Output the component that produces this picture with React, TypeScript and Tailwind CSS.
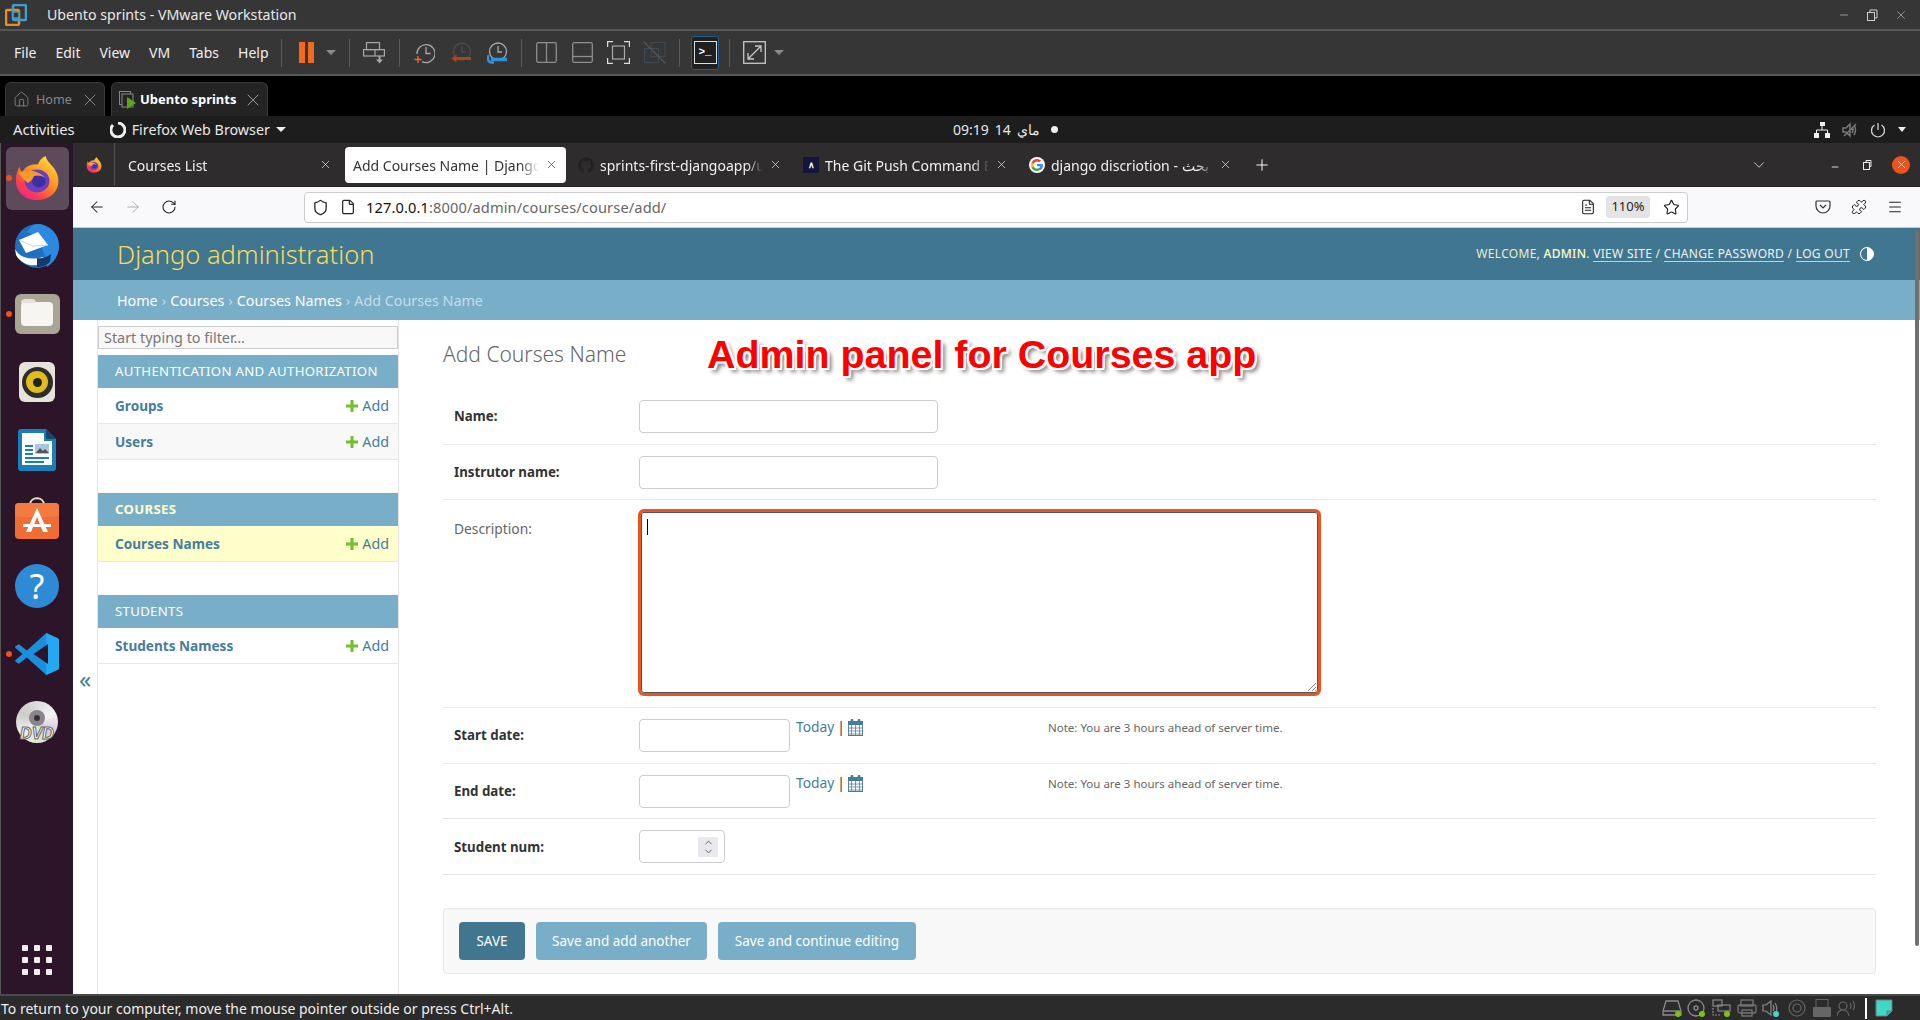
import React from "react";
import { ArrowLeft, ArrowRight, RotateCw, Shield, File, Star, Puzzle, Menu, X, Plus, ChevronDown, Minus, Home, ChevronUp, FileText } from "lucide-react";

const Sep = ({ className = "" }: { className?: string }) => <div className={`w-px h-7 bg-[#5a5a5a] shrink-0 ${className}`} />;
const Tri = ({ className = "" }: { className?: string }) => (
  <div className={`w-0 h-0 border-x-[5px] border-x-transparent border-t-[5px] border-t-[#8a8a8a] shrink-0 ${className}`} />
);

function FirefoxIcon({ size }: { size: number }) {
  return (
    <svg width={size} height={size} viewBox="0 0 48 48">
      <defs>
        <linearGradient id={`ff${size}`} x1="0.8" y1="0.1" x2="0.2" y2="0.95">
          <stop offset="0" stopColor="#ffd53d" />
          <stop offset="0.45" stopColor="#ff8a1f" />
          <stop offset="0.8" stopColor="#ff3d4e" />
          <stop offset="1" stopColor="#f0288c" />
        </linearGradient>
      </defs>
      <path d="M33 1c1 5 5 8 9 13 4 6 5 12 4 17-2 10-11 16-22 16C11 47 2 38 2 26c0-6 2-11 4-14 0 3 1 5 3 6 1-3 3-5 5-6 4-2 8-3 11-2 1-4 4-7 8-9z" fill={`url(#ff${size})`} />
      <ellipse cx="24" cy="27" rx="13" ry="12" fill="#6b3fc4" />
      <circle cx="26" cy="27" r="7" fill="#3f2f9e" />
      <path d="M5 19c4-3 12-4 19-1 5 2 7 4 8 6-4-3-7-3-11-2-2 4-6 9-8 6-3-3-6-6-8-9z" fill="#ff9a27" />
    </svg>
  );
}

function DockIcon({ children, dot, active }: { children: React.ReactNode; dot?: boolean; active?: boolean }) {
  return (
    <div className="relative h-[68px] flex items-center justify-center shrink-0">
      {active && <div className="absolute left-[5px] right-[4px] top-[3px] bottom-[2px] rounded-md bg-[#5d4a5b]" />}
      {dot && <div className="absolute left-[5px] top-[31px] w-[6px] h-[6px] rounded-full bg-[#e95420]" />}
      <div className="relative">{children}</div>
    </div>
  );
}

function Dock() {
  return (
    <div className="w-[73px] shrink-0 flex flex-col bg-[#2c1529] border-l border-[#555] relative">
      <div className="flex flex-col pt-[1px]">
        <DockIcon dot active><FirefoxIcon size={46} /></DockIcon>
        <DockIcon>
          <svg width="48" height="46" viewBox="0 0 48 46">
            <circle cx="24" cy="23" r="22" fill="#1f6fc2" />
            <path d="M24 1c10 0 22 8 22 22 0 10-6 17-12 21-2-10-4-20-10-28-3-4-6-6-10-7 3-4 6-8 10-8z" fill="#2a8ae0" />
            <path d="M6 17l19-8 10 13-22 8z" fill="#fff" />
            <path d="M6 17l14 6 15-1" fill="none" stroke="#c9ccd2" strokeWidth="1" />
            <path d="M2 26c4 8 14 12 28 8l3 5c-10 6-24 4-30-7z" fill="#fff" />
            <path d="M24 35c5 1 10-1 14-4l-1 8c-4 4-9 5-13 5z" fill="#16386e" />
          </svg>
        </DockIcon>
        <DockIcon dot>
          <div className="w-[45px] h-[40px] rounded-md bg-[#a9a595] flex items-center justify-center">
            <div className="relative w-[32px] h-[24px] rounded-sm bg-[#f6f5f2]">
              <div className="absolute -top-[3px] left-0 w-[15px] h-[4px] rounded-t-sm bg-[#e4e1da]" />
            </div>
          </div>
        </DockIcon>
        <DockIcon>
          <div className="w-[36px] h-[40px] rounded-md bg-[#e6e3da] flex items-center justify-center">
            <div className="w-[31px] h-[31px] rounded-full bg-[#2d2d2d] flex items-center justify-center">
              <div className="w-[22px] h-[22px] rounded-full bg-[#e2bb1c] flex items-center justify-center">
                <div className="w-[9px] h-[9px] rounded-full bg-[#222]" />
              </div>
            </div>
          </div>
        </DockIcon>
        <DockIcon>
          <svg width="38" height="42" viewBox="0 0 38 42">
            <path d="M3 0h25l10 10v29a3 3 0 0 1-3 3H3a3 3 0 0 1-3-3V3a3 3 0 0 1 3-3z" fill="#1a7fb8" />
            <path d="M28 0l10 10h-10z" fill="#15486e" />
            <path d="M4 4h22v8h8v24H4z" fill="#fff" />
            <rect x="7" y="16" width="8" height="2" fill="#1a7fb8" />
            <rect x="7" y="20" width="8" height="2" fill="#1a7fb8" />
            <rect x="7" y="24" width="8" height="2" fill="#1a7fb8" />
            <rect x="7" y="28" width="24" height="2" fill="#1a7fb8" />
            <rect x="7" y="32" width="19" height="2" fill="#1a7fb8" />
            <rect x="17" y="15" width="14" height="10" fill="#a9c8dc" />
            <path d="M18 24l4-5 3 3 2-2 4 4z" fill="#555" />
          </svg>
        </DockIcon>
        <DockIcon>
          <svg width="44" height="42" viewBox="0 0 44 42">
            <path d="M15 8c0-9 14-9 14 0" fill="none" stroke="#e9dcc9" strokeWidth="2" />
            <rect x="0" y="6" width="44" height="36" rx="4" fill="#ef6c33" />
            <rect x="0" y="6" width="44" height="14" rx="4" fill="#f47b3f" />
            <path d="M22 11L11 35h5l6-15 6 15h5z" fill="#fff" />
            <rect x="8" y="27" width="28" height="3" fill="#fff" />
          </svg>
        </DockIcon>
        <DockIcon>
          <div className="w-[44px] h-[44px] rounded-full bg-[#2f8ad6] flex items-center justify-center text-white text-[34px] leading-none">?</div>
        </DockIcon>
        <DockIcon dot>
          <svg width="44" height="44" viewBox="0 0 100 100">
            <path d="M71 98l26-12a5 5 0 0 0 3-5V19a5 5 0 0 0-3-5L71 2 27 42 9 28l-7 4a3 3 0 0 0 0 5l15 13L2 63a3 3 0 0 0 0 5l7 4 18-14z" fill="#1a8fdc" />
            <path d="M71 98l26-12a5 5 0 0 0 3-5V19a5 5 0 0 0-3-5L71 2z" fill="#25a8f2" />
            <path d="M75 27L42 50l33 23z" fill="#2c1529" />
          </svg>
        </DockIcon>
        <DockIcon>
          <div className="relative w-[42px] h-[42px]">
            <div className="absolute inset-0 rounded-full bg-[conic-gradient(#ddd,#f4f4f4,#d8c8e0,#dfe9cf,#eee,#ccc,#ddd)] flex items-center justify-center">
              <div className="w-[16px] h-[16px] rounded-full bg-[#8b858b] flex items-center justify-center -mt-2">
                <div className="w-[6px] h-[6px] rounded-full bg-[#333]" />
              </div>
            </div>
            <div className="absolute -left-[1px] -right-[1px] bottom-[1px] text-center text-[16px] leading-none italic font-extrabold text-white font-['Liberation_Sans',sans-serif] [-webkit-text-stroke:1px_#666]">DVD</div>
          </div>
        </DockIcon>
      </div>
      <div className="mt-auto mb-[19px] self-center grid grid-cols-3 gap-x-[6px] gap-y-[6px] pr-px">
        {Array.from({ length: 9 }).map((_, i) => (
          <div key={i} className="w-[6px] h-[6px] rounded-[1px] bg-[#eeeeee]" />
        ))}
      </div>
    </div>
  );
}

function BrowserTab({ icon, title, active, w }: { icon?: React.ReactNode; title: string; active?: boolean; w: string }) {
  return (
    <div className={`relative flex items-center h-[36px] rounded-[4px] shrink-0 ${w} ${active ? "bg-white text-[#333]" : "text-[#f0f0f0]"} gap-[6px]`}>
      {icon}
      <div className="flex-1 min-w-0 overflow-hidden whitespace-nowrap text-[14px] pt-[2px] [mask-image:linear-gradient(to_right,black_90%,transparent)]">{title}</div>
      <X size={13} strokeWidth={1.4} className={active ? "text-[#444] shrink-0" : "text-[#ddd] shrink-0"} />
    </div>
  );
}

function Row({ label, bold = true, children, h, lpt = "pt-[7px]" }: { label: string; bold?: boolean; children: React.ReactNode; h: string; lpt?: string }) {
  return (
    <div className={`flex border-b border-[#e6e6e6] pl-[11px] pt-[11px] ${h}`}>
      <div className={`w-[185px] shrink-0 ${lpt} ${bold ? "text-[13.3px] font-bold text-[#333]" : "text-[13.8px] text-[#666]"}`}>{label}</div>
      {children}
    </div>
  );
}

const Field = ({ w, h = "h-[33px]" }: { w: string; h?: string }) => (
  <input className={`${w} ${h} rounded-[4px] border border-[#ccc] bg-white shrink-0`} />
);

function ModelRow({ name, bg = "bg-white", h = "h-[36px]" }: { name: string; bg?: string; h?: string }) {
  return (
    <div className={`flex items-center justify-between border-b border-[#e6e6e6] pl-[17px] pr-[9px] ${bg} ${h}`}>
      <span className="text-[13.6px] font-bold text-[#447e9b] pt-[2px]">{name}</span>
      <span className="flex items-center gap-[4px] text-[14.3px] text-[#447e9b]">
        <svg width="12" height="12" viewBox="0 0 12 12"><path d="M4.500 0h3v4.500H12v3H7.500V12h-3V7.500H0v-3h4.500z" fill="#70bf2b" /></svg>
        Add
      </span>
    </div>
  );
}

const Section = ({ title, active }: { title: string; active?: boolean }) => (
  <div className={`h-[33px] bg-[#79aec8] flex items-center pl-[17px] pt-[1px] text-[13.2px] tracking-[0.32px] ${active ? "text-[#ffffcc] font-bold" : "text-white"}`}>{title}</div>
);

const Calendar = () => (
  <svg width="15" height="17" viewBox="0 0 17 17" preserveAspectRatio="none" className="ml-[1px]">
    <rect x="0.500" y="2.500" width="16" height="14" fill="#fff" stroke="#447e9b" />
    <rect x="0" y="2" width="17" height="4" fill="#447e9b" />
    <rect x="3" y="0" width="3" height="5" rx="1" fill="#447e9b" />
    <rect x="11" y="0" width="3" height="5" rx="1" fill="#447e9b" />
    <path d="M0 9h17M0 12h17M0 15h17M4 6v11M8.500 6v11M13 6v11" stroke="#447e9b" strokeWidth="0.800" />
  </svg>
);

const DateExtra = () => (
  <>
    <div className="flex items-center h-[17px] ml-[6px] w-[252px] shrink-0 text-[13.8px] text-[#447e9b]">
      Today <span className="text-[#333] ml-[3px] mr-[2px]">|</span>
      <Calendar />
    </div>
    <div className="text-[11.5px] text-[#666]">Note: You are 3 hours ahead of server time.</div>
  </>
);

function StatusIcons() {
  return (
    <div className="flex items-center gap-[5px] pr-[27px]">
      <svg width="20" height="18" viewBox="0 0 20 18" fill="none" stroke="#8a8a8a" strokeWidth="1.300"><path d="M4 2h12l3 10v4H1v-4zM1 12h18" /><circle cx="16" cy="15" r="3" fill="#7cc412" stroke="none" /></svg>
      <svg width="20" height="18" viewBox="0 0 20 18" fill="none" stroke="#8a8a8a" strokeWidth="1.300"><circle cx="9" cy="9" r="8" /><circle cx="9" cy="9" r="2" /><circle cx="15" cy="15" r="3" fill="#7cc412" stroke="none" /></svg>
      <svg width="20" height="18" viewBox="0 0 20 18" fill="none" stroke="#8a8a8a" strokeWidth="1.200"><rect x="1" y="1" width="9" height="6" /><rect x="6" y="6" width="12" height="6" /><path d="M1 9v7h8" strokeDasharray="2 1" /><circle cx="15" cy="15" r="3" fill="#7cc412" stroke="none" /></svg>
      <svg width="20" height="18" viewBox="0 0 20 18" fill="none" stroke="#777" strokeWidth="1.300"><rect x="4" y="1" width="12" height="6" /><rect x="1" y="6" width="18" height="8" rx="2" /><rect x="5" y="11" width="10" height="6" /></svg>
      <svg width="20" height="18" viewBox="0 0 20 18" fill="none" stroke="#8a8a8a" strokeWidth="1.200"><path d="M1 6h3l5-4v14l-5-4H1zM11 6q2 3 0 6M13 4q3 5 1 9" /><circle cx="14" cy="15" r="3" fill="#3fd8c8" stroke="none" /></svg>
      <svg width="20" height="18" viewBox="0 0 20 18" fill="none" stroke="#666" strokeWidth="1.200"><circle cx="10" cy="9" r="8" /><circle cx="10" cy="9" r="4" /></svg>
      <svg width="20" height="18" viewBox="0 0 20 18"><rect x="4" y="0.500" width="12" height="8" fill="none" stroke="#666" /><rect x="1" y="8" width="18" height="10" rx="1" fill="#666" /></svg>
      <svg width="20" height="18" viewBox="0 0 20 18" fill="none" stroke="#666" strokeWidth="1.200"><circle cx="6" cy="7" r="4" /><path d="M0 17q1-6 6-6t6 6M13 4q2 3 0 6M16 2q3 5 0 9" /></svg>
      <div className="w-[2px] h-[21px] bg-white ml-[3px]" />
      <svg width="18" height="18" viewBox="0 0 18 18" className="ml-[3px]"><path d="M1 1h16v11l-5 5H1z" fill="#3fd8c8" stroke="#777" /><path d="M12 17v-5h5" fill="#2bb" stroke="#777" /></svg>
    </div>
  );
}

function VmToolbar() {
  return (
    <div className="h-[47px] shrink-0 bg-[#363636] border-y-2 border-[#565656] flex items-center text-[14px] text-[#efefef] pl-[14px]">
      <div className="flex items-center w-[267px] gap-[19px]">
        <span>File</span><span>Edit</span><span>View</span><span>VM</span><span>Tabs</span><span>Help</span>
      </div>
      <Sep />
      <div className="w-[6px] h-[21px] bg-[#f26a1b] ml-[17px]" />
      <div className="w-[6px] h-[21px] bg-[#f26a1b] ml-[3px]" />
      <Tri className="ml-[12px]" />
      <Sep className="ml-[13px]" />
      <svg width="22" height="22" viewBox="0 0 22 22" fill="none" stroke="#a8a8a8" strokeWidth="1.200" className="ml-[13px]">
        <rect x="3.500" y="0.600" width="13" height="7" /><rect x="0.600" y="7.600" width="20.800" height="6.400" /><path d="M12 7.600V14" />
        <path d="M16.500 14v4" strokeWidth="2" /><path d="M13 17.500h7l-3.500 4z" fill="#a8a8a8" stroke="none" />
      </svg>
      <Sep className="ml-[14px]" />
      <svg width="21" height="22" viewBox="0 0 21 22" fill="none" stroke="#a8a8a8" strokeWidth="1.300" className="ml-[14px]">
        <path d="M3 12a9 9 0 1 1 5 7.700" /><path d="M12 5v6.500h4.500" />
        <path d="M0.500 17.500h7M4 14v7" stroke="#e8702a" />
      </svg>
      <svg width="21" height="22" viewBox="0 0 21 22" fill="none" stroke="#4c4c4c" strokeWidth="1.300" className="ml-[16px]">
        <circle cx="11" cy="9.500" r="8.500" /><path d="M11 4v6h4" />
        <path d="M3 16.500h17" stroke="#a5481b" strokeWidth="3" /><path d="M0.500 16.500l5-4v8z" fill="#a5481b" stroke="none" />
      </svg>
      <svg width="21" height="22" viewBox="0 0 21 22" fill="none" stroke="#a8a8a8" strokeWidth="1.300" className="ml-[15px]">
        <circle cx="11" cy="9.500" r="8.500" /><path d="M11 4v6h4" />
        <path d="M4 17.500h16" stroke="#2d94dc" strokeWidth="3.500" /><path d="M1 13v3.500q0 4 4 4h2" stroke="#2d94dc" strokeWidth="2.500" />
      </svg>
      <Sep className="ml-[13px]" />
      <svg width="21" height="21" viewBox="0 0 21 21" fill="none" stroke="#8e8e8e" strokeWidth="1.300" className="ml-[14px]"><rect x="0.700" y="0.700" width="19.600" height="19.600" rx="1.500" /><path d="M10.500 0.700v19.600" /></svg>
      <svg width="21" height="21" viewBox="0 0 21 21" fill="none" stroke="#8e8e8e" strokeWidth="1.300" className="ml-[15px]"><rect x="0.700" y="0.700" width="19.600" height="19.600" rx="1.500" /><path d="M0.700 14.500h19.600" /></svg>
      <svg width="23" height="23" viewBox="0 0 23 23" fill="none" stroke="#dcdcdc" strokeWidth="1.200" className="ml-[14px]"><path d="M0.600 6V0.600H6M17 0.600h5.400V6M22.400 17v5.400H17M6 22.400H0.600V17" /><rect x="5.500" y="5" width="12" height="13" stroke="#aaa" /></svg>
      <svg width="23" height="23" viewBox="0 0 23 23" fill="none" stroke="#3d4a54" strokeWidth="1.200" className="ml-[13px]"><rect x="1.500" y="7.500" width="14" height="14" /><rect x="8" y="1.500" width="14" height="14" /><path d="M0.500 0.500l22 22" stroke="#555" /></svg>
      <Sep className="ml-[13px]" />
      <div className="ml-[11px] w-[28px] h-[34px] border border-[#1f5d8c] rounded-[3px] flex items-center justify-center bg-[#202020] shrink-0">
        <div className="w-[23px] h-[23px] border border-[#ddd] flex items-center justify-center text-[11px] font-bold leading-none text-white font-['Liberation_Mono',monospace]">&gt;_</div>
      </div>
      <Sep className="ml-[10px]" />
      <svg width="23" height="23" viewBox="0 0 23 23" fill="none" stroke="#c8c8c8" strokeWidth="1.300" className="ml-[13px]"><rect x="0.700" y="0.700" width="21.600" height="21.600" /><path d="M5.500 17.500l12-12M12 5h6v6M5 12v6h6" /></svg>
      <Tri className="ml-[8px]" />
    </div>
  );
}

export default function App() {
  return (
    <div className="w-[1920px] h-[1020px] flex flex-col overflow-hidden bg-black font-['Noto_Sans',sans-serif]">
      {/* VMware title */}
      <div className="h-[29px] shrink-0 bg-[#363636] flex items-center text-[14.2px] text-[#e8e8e8]">
        <svg width="22" height="22" viewBox="0 0 22 22" className="ml-[5px] mr-[20px]">
          <rect x="1" y="6" width="13" height="15" rx="1.500" fill="none" stroke="#f08c1c" strokeWidth="2.500" />
          <rect x="8" y="1" width="13" height="15" rx="1.500" fill="none" stroke="#3fa0d8" strokeWidth="2.500" />
          <rect x="8" y="8" width="6" height="6" fill="#363636" stroke="#3fa0d8" strokeWidth="1.500" />
        </svg>
        <span>Ubento sprints - VMware Workstation</span>
        <div className="ml-auto flex items-center gap-[16px] pr-[12px] text-[#cfcfcf]">
          <Minus size={12} strokeWidth={1.3} />
          <svg width="12" height="12" viewBox="0 0 12 12" fill="none" stroke="#cfcfcf"><rect x="1.500" y="3.500" width="7" height="8" /><path d="M4 3V1h7v8H9" /></svg>
          <X size={14} strokeWidth={1} />
        </div>
      </div>
      <VmToolbar />
      {/* VMware tabs */}
      <div className="h-[40px] shrink-0 bg-black flex items-end pl-[5px] gap-[6px]">
        <div className="h-[34px] w-[100px] rounded-t-md bg-[#242424] border border-b-0 border-[#3a3a3a] flex items-center pl-[7px] pr-[4px] text-[12.6px] text-[#888] gap-[6px]">
          <Home size={17} strokeWidth={1.2} />
          <span className="flex-1 pt-[2px]">Home</span>
          <X size={20} strokeWidth={1.200} />
        </div>
        <div className="h-[34px] w-[157px] rounded-t-md bg-[#242424] border border-b-0 border-[#3a3a3a] flex items-center pl-[7px] pr-[4px] text-[13px] text-white font-bold gap-[3px]">
          <svg width="18" height="18" viewBox="0 0 18 18" className="shrink-0"><rect x="0.500" y="0.500" width="11" height="13" fill="none" stroke="#888" /><rect x="3" y="3" width="11" height="13" fill="#242424" stroke="#888" /><path d="M8 6l9 6-9 6z" fill="#5aa51a" /></svg>
          <span className="flex-1 whitespace-nowrap">Ubento sprints</span>
          <X size={20} strokeWidth={1.200} className="text-[#999]" />
        </div>
      </div>
      {/* GNOME bar */}
      <div className="relative h-[27px] shrink-0 bg-[#1d1d1d] flex items-center pl-[13px] text-[14.8px] text-[#e8e8e8]">
        <span>Activities</span>
        <svg width="16" height="16" viewBox="0 0 16 16" className="ml-[35px] mr-[6px]"><path d="M8 1a7 7 0 1 1-5 2" fill="none" stroke="#eee" strokeWidth="3" /></svg>
        <span className="text-[14.3px]">Firefox Web Browser</span>
        <div className="w-0 h-0 ml-[6px] border-x-[5px] border-x-transparent border-t-[5px] border-t-[#eee]" />
        <div className="absolute left-[953px] top-0 h-full flex items-center gap-[6px] text-[14px]" dir="ltr">
          <span>09:19</span><span>14</span><span>ماي</span>
          <div className="w-[7px] h-[7px] rounded-full bg-[#eee] ml-[5px]" />
        </div>
        <div className="ml-auto flex items-center gap-[12px] pr-[14px]">
          <svg width="16" height="16" viewBox="0 0 16 16" fill="#eee"><rect x="6" y="0" width="5" height="4" /><rect x="0" y="11" width="5" height="5" /><rect x="11" y="11" width="5" height="5" /><path d="M8 4v4M2.500 11V8h11v3" stroke="#eee" fill="none" /></svg>
          <svg width="16" height="16" viewBox="0 0 16 16" fill="none" stroke="#777" strokeWidth="1.500"><path d="M1 6h3l4-4v12l-4-4H1zM10 5q2 3 0 6M12 3q3 5 0 10M2 14L14 2" /></svg>
          <svg width="16" height="16" viewBox="0 0 16 16" fill="none" stroke="#ddd" strokeWidth="1.200"><path d="M8 1v7M4.500 3a6.500 6.500 0 1 0 7 0" /></svg>
          <div className="w-0 h-0 border-x-[4px] border-x-transparent border-t-[5px] border-t-[#eee]" />
        </div>
      </div>
      {/* Desktop */}
      <div className="flex-1 min-h-0 flex">
        <Dock />
        <div className="flex-1 min-w-0 flex flex-col bg-white">
          {/* Firefox tabs */}
          <div className="h-[44px] shrink-0 bg-[#2f2c2e] flex items-center border-b border-[#222]">
            <div className="w-[42px] h-full flex items-center justify-center border-r border-[#555] shrink-0"><FirefoxIcon size={16} /></div>
            <div className="flex items-center ml-[5px] gap-[2px]">
              <BrowserTab title="Courses List" w="w-[223px] pl-[8px] pr-[11px]" />
              <BrowserTab active title="Add Courses Name | Django s" w="w-[221px] pl-[8px] pr-[8px]" />
              <BrowserTab w="w-[222px] pl-[10px] pr-[8px]" title="sprints-first-djangoapp/ur" icon={<svg width="16" height="16" viewBox="0 0 24 24" className="shrink-0" fill="#222"><path d="M12 .5a12 12 0 0 0-3.800 23.400c.6.100.8-.300.8-.600v-2c-3.300.700-4-1.600-4-1.600-.5-1.400-1.300-1.800-1.300-1.800-1.100-.700.100-.700.100-.700 1.200.100 1.800 1.200 1.800 1.200 1.100 1.800 2.800 1.300 3.500 1 .1-.8.400-1.300.800-1.600-2.700-.3-5.500-1.300-5.500-5.900 0-1.300.5-2.400 1.200-3.200-.1-.3-.5-1.500.1-3.200 0 0 1-.3 3.300 1.200a11.500 11.500 0 0 1 6 0c2.300-1.500 3.300-1.200 3.300-1.200.7 1.700.2 2.900.1 3.200.8.800 1.200 1.900 1.200 3.200 0 4.600-2.800 5.600-5.500 5.900.4.400.8 1.100.8 2.200v3.300c0 .3.200.7.800.6A12 12 0 0 0 12 .500z" /></svg>} />
              <BrowserTab w="w-[224px] pl-[11px] pr-[8px]" title="The Git Push Command Ex" icon={<span className="w-[16px] h-[16px] bg-[#14143c] shrink-0 flex items-center justify-center text-[9px] font-bold text-white leading-none">∧</span>} />
              <BrowserTab w="w-[222px] pl-[11px] pr-[8px]" title="django discriotion - بحث G" icon={<svg width="16" height="16" viewBox="0 0 24 24" className="shrink-0"><circle cx="12" cy="12" r="12" fill="#fff" /><path d="M21 12.300c0-.7-.1-1.300-.2-1.800H12v3.500h5a4.300 4.300 0 0 1-1.900 2.800v2.300h3a9 9 0 0 0 2.900-6.800z" fill="#4285f4" /><path d="M12 21c2.400 0 4.500-.8 6-2.200l-3-2.300c-.8.600-1.800.9-3 .9-2.300 0-4.300-1.600-5-3.700H4v2.400A9 9 0 0 0 12 21z" fill="#34a853" /><path d="M7 13.700a5.400 5.400 0 0 1 0-3.400V7.900H4a9 9 0 0 0 0 8.200z" fill="#fbbc05" /><path d="M12 6.600c1.300 0 2.500.5 3.400 1.300L18 5.300A9 9 0 0 0 4 7.900l3 2.400c.7-2.100 2.700-3.700 5-3.700z" fill="#ea4335" /></svg>} />
            </div>
            <Plus size={18} strokeWidth={1.300} className="text-white ml-[13px]" />
            <div className="ml-auto flex items-center">
              <ChevronDown size={18} strokeWidth={1.200} className="text-[#ddd] mr-[62px]" />
              <Minus size={10} className="text-white mr-[22px] mt-[5px]" />
              <svg width="10" height="10" viewBox="0 0 10 10" fill="none" stroke="#eee" className="mr-[20px]"><rect x="1.500" y="2.500" width="6" height="7" /><path d="M4 2V.500h5v6H8" /></svg>
              <div className="w-[18px] h-[18px] rounded-full bg-[#e95420] flex items-center justify-center mr-[10px]"><X size={13} strokeWidth={1.600} className="text-white" /></div>
            </div>
          </div>
          {/* URL bar */}
          <div className="h-[41px] shrink-0 bg-[#f9f9fb] border-b border-[#ccc] flex items-center text-[#222]">
            <ArrowLeft size={18} strokeWidth={1.400} className="ml-[15px]" />
            <ArrowRight size={18} strokeWidth={1.300} className="ml-[18px] text-[#aaa]" />
            <RotateCw size={16} strokeWidth={1.600} className="ml-[19px]" />
            <div className="ml-[127px] w-[1384px] h-[31px] rounded-[4px] border border-[#ccc] bg-white flex items-center pl-[7px] pr-[3px]">
              <Shield size={17} strokeWidth={1.800} />
              <File size={16} strokeWidth={1.800} className="ml-[11px]" />
              <span className="ml-[10px] text-[14.6px] text-[#666] tracking-[0.13px] pt-[1px]"><span className="text-[#111]">127.0.0.1</span>:8000/admin/courses/course/add/</span>
              <FileText size={16} strokeWidth={1.600} className="ml-auto" />
              <div className="ml-[10px] w-[44px] h-[22px] rounded-[3px] bg-[#e4e4e6] flex items-center justify-center text-[13px]">110%</div>
              <Star size={17} strokeWidth={1.600} className="ml-[13px] mr-[4px]" />
            </div>
            <svg width="16" height="16" viewBox="0 0 16 16" fill="none" stroke="#333" strokeWidth="1.200" className="ml-[127px]"><path d="M2 2h12a1 1 0 0 1 1 1v4a7 7 0 0 1-14 0V3a1 1 0 0 1 1-1zM5 6l3 3 3-3" /></svg>
            <Puzzle size={16} strokeWidth={1.500} className="ml-[20px]" />
            <Menu size={16} strokeWidth={1.600} className="ml-[20px]" />
          </div>
          {/* Django page */}
          <div className="flex-1 min-h-0 flex flex-col relative">
            <div className="h-[52px] shrink-0 bg-[#417690] flex items-center pl-[44px] pr-[46px]">
              <span className="text-[25.5px] text-[#f5dd5d] font-light pt-[1px]">Django administration</span>
              <div className="ml-auto flex items-center text-[12px] text-[#eeeec4] tracking-[0.3px]">
                <span>WELCOME, <span className="text-[#ffffcc] font-medium">ADMIN</span>.&nbsp;</span>
                <span className="text-[#f2f2f2] border-b border-[#ccc] leading-[15px]">VIEW SITE</span>
                <span>&nbsp;/&nbsp;</span>
                <span className="text-[#f2f2f2] border-b border-[#ccc] leading-[15px]">CHANGE PASSWORD</span>
                <span>&nbsp;/&nbsp;</span>
                <span className="text-[#f2f2f2] border-b border-[#ccc] leading-[15px]">LOG OUT</span>
                <div className="ml-[10px] w-[14px] h-[14px] rounded-full bg-white border border-white flex justify-start"><div className="w-[6px] h-full rounded-l-full bg-[#417690]" /></div>
              </div>
            </div>
            <div className="h-[40px] shrink-0 bg-[#79aec8] flex items-center pl-[44px] pt-[1px] text-[14.3px] text-white">
              Home <span className="text-[#c5dce8] mx-[4px]">›</span> Courses <span className="text-[#c5dce8] mx-[4px]">›</span> Courses Names <span className="text-[#c5dce8] mx-[4px]">›</span> <span className="text-[#c5dce8]">Add Courses Name</span>
            </div>
            <div className="flex-1 min-h-0 flex">
              <div className="w-[24px] shrink-0 flex items-start justify-center pt-[347px] text-[#447e9b] text-[24px] leading-[24px]">«</div>
              <div className="w-[302px] shrink-0 border-x border-[#e6e6e6] pt-[6px]">
                <input placeholder="Start typing to filter…" className="block w-[300px] h-[23px] border border-[#ccc] bg-[#f8f8f8] px-[5px] text-[14.4px] placeholder:text-[#777] mb-[6px]" />
                <Section title="AUTHENTICATION AND AUTHORIZATION" />
                <ModelRow name="Groups" />
                <ModelRow name="Users" bg="bg-[#f8f8f8]" />
                <div className="h-[33px]" />
                <Section title="COURSES" active />
                <ModelRow name="Courses Names" bg="bg-[#ffffcc]" />
                <div className="h-[33px]" />
                <Section title="STUDENTS" />
                <ModelRow name="Students Namess" />
              </div>
              <div className="flex-1 min-w-0 pl-[44px] pr-[44px]">
                <div className="flex items-center h-[69px]">
                  <h1 className="text-[21px] font-light text-[#666] w-[265px]">Add Courses Name</h1>
                  <div className="text-[39.4px] font-bold text-[#ff0000] -ml-[1px] font-['Liberation_Sans',sans-serif] [text-shadow:0_0_2px_#fff,2px_2px_0_#fff,-2px_-2px_0_#fff,2px_-2px_0_#fff,-2px_2px_0_#fff,0_2px_0_#fff,2px_0_0_#fff,4px_4px_4px_#777]">Admin panel for Courses app</div>
                </div>
                <Row label="Name:" h="h-[56px]"><Field w="w-[299px]" /></Row>
                <Row label="Instrutor name:" h="h-[55px]"><Field w="w-[299px]" /></Row>
                <Row label="Description:" bold={false} h="h-[208px]" lpt="pt-[8px]">
                  <div className="relative w-[683px] h-[187px] -mt-[2px] -ml-[1px] rounded-[6px] border-[3px] border-[#e95420] shrink-0 shadow-[inset_0_0_0_1px_#555]">
                    <div className="absolute left-[6px] top-[7px] w-px h-[16px] bg-black" />
                    <svg width="10" height="10" viewBox="0 0 10 10" stroke="#888" className="absolute right-[1px] bottom-[1px]"><path d="M1 9l8-8M5 9l4-4M8 9l1-1" /></svg>
                  </div>
                </Row>
                <Row label="Start date:" h="h-[56px]"><Field w="w-[151px]" /><DateExtra /></Row>
                <Row label="End date:" h="h-[55px]"><Field w="w-[151px]" /><DateExtra /></Row>
                <Row label="Student num:" h="h-[56px]" lpt="pt-[8px]">
                  <div className="w-[86px] h-[33px] rounded-[4px] border border-[#ccc] flex items-center justify-end pr-[6px]">
                    <div className="w-[20px] h-[20px] bg-[#e9e9ed] flex flex-col items-center justify-center text-[#555]">
                      <ChevronUp size={11} className="-mb-[1px]" /><ChevronDown size={11} className="-mt-[1px]" />
                    </div>
                  </div>
                </Row>
                <div className="mt-[33px] h-[66px] border border-[#e6e6e6] rounded-[4px] bg-[#f8f8f8] flex items-center pl-[15px] gap-[11px] text-[13.5px] text-white">
                  <div className="h-[38px] w-[66px] rounded-[4px] bg-[#417690] flex items-center justify-center">SAVE</div>
                  <div className="h-[38px] w-[171px] rounded-[4px] bg-[#79aec8] flex items-center justify-center">Save and add another</div>
                  <div className="h-[38px] w-[198px] rounded-[4px] bg-[#79aec8] flex items-center justify-center">Save and continue editing</div>
                </div>
              </div>
            </div>
            <div className="absolute right-[1px] top-[2px] w-[4px] h-[716px] rounded-full bg-[#707070]" />
          </div>
        </div>
      </div>
      {/* Status */}
      <div className="h-[26px] shrink-0 bg-[#2b2b2b] border-t-2 border-[#4a4a4a] flex items-center justify-between pl-[1px] text-[14px] text-[#eee]">
        <span>To return to your computer, move the mouse pointer outside or press Ctrl+Alt.</span>
        <StatusIcons />
      </div>
    </div>
  );
}
